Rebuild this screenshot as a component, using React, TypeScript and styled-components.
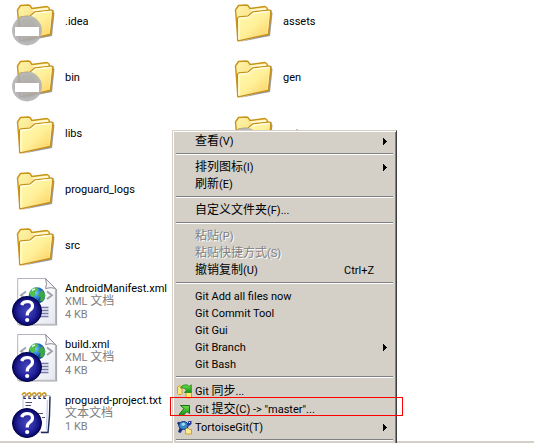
import React from 'react';
import styled, { createGlobalStyle } from 'styled-components';

const GlobalStyle = createGlobalStyle`
  *, *::before, *::after { box-sizing: border-box; }
  body {
    margin: 0;
    background: #fff;
    color: #000;
    overflow: hidden;
    font: 11px/13px Roboto, "Noto Sans CJK SC", sans-serif;
  }
  button {
    margin: 0;
    padding: 0;
    border: 0;
    background: none;
    color: inherit;
    font: inherit;
    text-align: left;
  }
`;

const Explorer = styled.div`
  position: relative;
  display: flex;
  flex-direction: column;
  height: 100vh;
  overflow: hidden;
`;

const FilePane = styled.main`
  flex: 1;
  min-height: 0;
  overflow: hidden;
  display: grid;
  grid-template-columns: 218px 218px;
  grid-template-rows: repeat(8, 40px);
  grid-auto-flow: column;
  row-gap: 16px;
  padding: 1px 0 0 12px;
`;

const StatusEdge = styled.footer`
  flex: none;
  height: 2px;
  background: #d4d0c8;
`;

const Tile = styled.button`
  display: flex;
  align-items: center;
  gap: 5px;
`;

const TileIcon = styled.svg`
  flex: none;
  width: 48px;
  height: 50px;
  overflow: visible;
`;

const TileText = styled.span`
  display: flex;
  flex-direction: column;
  white-space: nowrap;
`;

const TileDetail = styled.span`
  color: #808080;
`;

const Han = styled.span`
  font-size: 12px;
  line-height: 1px;
`;

const ContextMenu = styled.div`
  position: absolute;
  left: 172px;
  top: 130px;
  width: 225px;
  padding: 1px;
  background: #d4d0c8;
  border: 1px solid;
  border-color: #d4d0c8 #404040 #404040 #d4d0c8;
  box-shadow: inset 1px 1px #fff, inset -1px -1px #808080;
`;

const MenuBody = styled.div`
  display: flex;
  flex-direction: column;
  padding: 1px;
`;

const MenuItem = styled.button<{ $tall?: boolean }>`
  position: relative;
  display: grid;
  grid-template-columns: 20px 1fr auto 20px;
  align-items: center;
  height: ${(p) => (p.$tall ? 18 : 17)}px;
  white-space: nowrap;

  &:disabled {
    color: #808080;
    text-shadow: 1px 1px #fff;
  }
`;

const MenuIconSlot = styled.span`
  display: flex;
  padding-left: 1px;
`;

const MenuIcon = styled.svg`
  width: 16px;
  height: 16px;
`;

const SubmenuArrow = styled.svg`
  width: 4px;
  height: 7px;
  margin-left: 9px;
`;

const Separator = styled.hr`
  width: calc(100% - 2px);
  height: 2px;
  margin: 3px 1px 4px;
  border: 0;
  border-top: 1px solid #808080;
  border-bottom: 1px solid #fff;
`;

const RedOutline = styled.span`
  position: absolute;
  inset: -3px -9px 2px -5px;
  border: 1px solid #f00;
  pointer-events: none;
`;

const SharedDefs = styled.svg`
  position: absolute;
  width: 0;
  height: 0;
`;

function Label({ text }: { text: string }) {
  return (
    <span>
      {text.split(/([\u4e00-\u9fff]+)/).map((part, i) =>
        i % 2 ? <Han key={i}>{part}</Han> : part,
      )}
    </span>
  );
}

function Gradients() {
  return (
    <SharedDefs aria-hidden="true">
      <defs>
        <linearGradient id="folderFront" x1="0" y1="0" x2="1" y2="1">
          <stop offset="0" stopColor="#fffbb4" />
          <stop offset="0.5" stopColor="#fff09a" />
          <stop offset="1" stopColor="#fccb58" />
        </linearGradient>
        <linearGradient id="folderBack" x1="0" y1="0" x2="1" y2="1">
          <stop offset="0" stopColor="#fff6b0" />
          <stop offset="1" stopColor="#f0c848" />
        </linearGradient>
        <radialGradient id="ignored">
          <stop offset="0" stopColor="#a4a4ac" />
          <stop offset="0.7" stopColor="#a9a9ad" />
          <stop offset="1" stopColor="#b4b4b4" />
        </radialGradient>
        <radialGradient id="unknown">
          <stop offset="0" stopColor="#4646be" />
          <stop offset="0.6" stopColor="#2626a0" />
          <stop offset="1" stopColor="#050560" />
        </radialGradient>
        <radialGradient id="globe" cx="0.4" cy="0.35">
          <stop offset="0" stopColor="#8cd0ff" />
          <stop offset="0.6" stopColor="#2c80d4" />
          <stop offset="1" stopColor="#164a98" />
        </radialGradient>
        <linearGradient id="paper" x1="0" y1="0" x2="1" y2="1">
          <stop offset="0.4" stopColor="#fff" />
          <stop offset="1" stopColor="#e4e6f0" />
        </linearGradient>
        <linearGradient id="arrow" x1="0" y1="0" x2="0" y2="1">
          <stop offset="0" stopColor="#6fe04a" />
          <stop offset="1" stopColor="#109010" />
        </linearGradient>
      </defs>
    </SharedDefs>
  );
}

function FolderArt() {
  return (
    <>
      <path d="M9 46 L40 40 L42.500 17 L40 15 L38 38 Z" fill="#77777f" opacity="0.75" />
      <path
        d="M5.500 14 L8.500 9.500 L16.500 9 Q18 9 19 11 L20 12.500 L35 10.500 L37 12 L37.500 14 L41 15 L38.500 38 L8 44.500 Z"
        fill="url(#folderBack)"
        stroke="#c89418"
        strokeWidth="1.400"
        strokeLinejoin="round"
      />
      <path d="M20 13.500 L36 11.800 L36.500 14 L22 16 Z" fill="#fffad0" />
      <path
        d="M7.500 22.500 Q7.500 21 9 20.800 L18 20 L23 15.800 L39.500 14 Q41 14 40.800 15.500 L38.300 38.300 L8.500 44.800 Q7.500 45 7.500 43 Z"
        fill="url(#folderFront)"
        stroke="#c48f1c"
        strokeWidth="1.200"
        strokeLinejoin="round"
      />
      <path d="M9 43 V22.300 L18.500 21.400 L23.500 17.200 L39 15.500" fill="none" stroke="#fffde0" strokeWidth="1.300" />
      <path d="M39.300 16.500 L37.200 37" fill="none" stroke="#fff0a8" strokeWidth="1" />
    </>
  );
}

function IgnoredBadge() {
  return (
    <>
      <circle cx="15" cy="34.500" r="15" fill="url(#ignored)" opacity="0.88" />
      <rect x="3" y="31" width="24" height="9" fill="#fff" />
    </>
  );
}

function UnknownBadge() {
  return (
    <>
      <circle cx="15" cy="35" r="14.500" fill="url(#unknown)" stroke="#00004c" />
      <path d="M9.500 29 Q11 25.500 15.500 25.500 Q20.500 25.800 20.500 30 Q20.500 32.500 17.500 34.500 Q15.200 36 15.200 39.500" fill="none" stroke="#fff" strokeWidth="3.200" />
      <circle cx="15.200" cy="44" r="2.100" fill="#fff" />
    </>
  );
}

function XmlArt() {
  return (
    <>
      <path d="M44.500 13 V49 H7" fill="none" stroke="#a8a8b0" strokeWidth="1.200" />
      <path d="M5.700 2.500 H33.500 L43.500 12.500 V48.300 H5.700 Z" fill="url(#paper)" stroke="#b4b4bc" />
      <path d="M33.500 2.500 Q35.500 8 33.500 12.500 Q39 10.800 43.500 12.500 Z" fill="#f4f4f8" stroke="#8c8c94" />
      <path d="M14 15.500 L9 19.300 L14 23" fill="none" stroke="#a0a0ae" strokeWidth="1.800" />
      <path d="M35 15.500 L40 19.300 L35 23" fill="none" stroke="#a0a0ae" strokeWidth="1.800" />
      <circle cx="25" cy="19.500" r="8.300" fill="url(#globe)" />
      <path d="M18 16 Q20 11.500 25 11.500 L26.500 14 L23 16 L24 19 L20.500 21 L18 19 Z" fill="#4fc04c" />
      <path d="M27 17.500 L30 14 L33 18 Q33.500 22 30.500 25.500 L28 25 L28.500 21 L26 20 Z" fill="#3aa844" />
      <path d="M20 14.500 L23 12.800" stroke="#e2ffd8" strokeWidth="1.500" />
      <path d="M23 31.500 H36.500 M23 34.500 H36.500 M23 37.500 H36.500 M23 40.500 H36.500" stroke="#7878a8" strokeWidth="1.500" />
    </>
  );
}

function NotepadArt() {
  const rings = [12, 17, 22, 27, 32];
  return (
    <>
      <path d="M11 7.500 H38 L36.500 44 H11 Z" fill="#fdfdff" stroke="#c0c4d8" />
      <path d="M38 8.500 L37.500 28 L36 44.500 H29" fill="none" stroke="#202a58" strokeWidth="1.400" />
      <path d="M35.500 12 L34.500 42" stroke="#c4d0ee" strokeWidth="1.500" />
      <path d="M13.500 14.500 H20 M13.500 17.500 H19 M13.500 21.500 H20 M13.500 25.500 H31 M30 29.500 H33" stroke="#50506c" strokeWidth="1.200" />
      <g fill="none">
        {rings.map((x) => (
          <g key={x}>
            <path d={`M${x} 8 V10.500 H${x + 2}`} stroke="#283064" strokeWidth="1.200" />
            <path d={`M${x - 2} 7 Q${x - 1} 4.500 ${x + 1} 5 Q${x + 3} 6 ${x + 1} 9`} stroke="#c89a28" strokeWidth="1.600" />
          </g>
        ))}
      </g>
    </>
  );
}

type FileKind = 'folder' | 'ignored' | 'xml' | 'txt';

interface FileEntry {
  name: string;
  kind: FileKind;
  details?: string[];
}

const files: FileEntry[] = [
  { name: '.idea', kind: 'ignored' },
  { name: 'bin', kind: 'ignored' },
  { name: 'libs', kind: 'folder' },
  { name: 'proguard_logs', kind: 'folder' },
  { name: 'src', kind: 'folder' },
  { name: 'AndroidManifest.xml', kind: 'xml', details: ['XML 文档', '4 KB'] },
  { name: 'build.xml', kind: 'xml', details: ['XML 文档', '4 KB'] },
  { name: 'proguard-project.txt', kind: 'txt', details: ['文本文档', '1 KB'] },
  { name: 'assets', kind: 'folder' },
  { name: 'gen', kind: 'folder' },
  { name: 'out', kind: 'ignored' },
];

function FileTile({ file }: { file: FileEntry }) {
  return (
    <Tile type="button">
      <TileIcon viewBox="0 0 48 50" aria-hidden="true">
        {(file.kind === 'folder' || file.kind === 'ignored') && <FolderArt />}
        {file.kind === 'ignored' && <IgnoredBadge />}
        {file.kind === 'xml' && <XmlArt />}
        {file.kind === 'txt' && <NotepadArt />}
        {(file.kind === 'xml' || file.kind === 'txt') && <UnknownBadge />}
      </TileIcon>
      <TileText>
        <span>{file.name}</span>
        {file.details?.map((d) => (
          <TileDetail key={d}>
            <Label text={d} />
          </TileDetail>
        ))}
      </TileText>
    </Tile>
  );
}

const SyncIcon = () => (
  <MenuIcon viewBox="0 0 16 16" aria-hidden="true">
    <path d="M1.500 4 L3 3 H5 L6 4 V10.500 L5 11.500 H2.500 L1.500 10.500 Z" fill="#ffe680" stroke="#d0a020" />
    <path d="M10 9 L11 8 H14 L15.500 9 V14 L14.500 15 H11 L10 14 Z" fill="#ffe680" stroke="#d0a020" />
    <path d="M4.500 5 Q6 1.500 10 1.800 Q12.500 2 13 3.500 L15.300 1.800 V9.500 H8.500 L10.500 7 Q8.500 4 4.500 5 Z" fill="url(#arrow)" stroke="#188818" strokeWidth="0.800" />
  </MenuIcon>
);

const CommitIcon = () => (
  <MenuIcon viewBox="0 0 16 16" aria-hidden="true">
    <path d="M4.500 4.500 H13.500 V12.500 L11 10.500 L7 14.500 H3.500 V13 L8 7.500 Z" fill="url(#arrow)" stroke="#187018" />
  </MenuIcon>
);

const TortoiseIcon = () => (
  <MenuIcon viewBox="0 0 16 16" aria-hidden="true">
    <path d="M1 4 L3 2.500 L5 5 L3 7 Z M2 13 L4 8 L7 10 L4.500 14 Z M8 9 L12 8.500 L10 12 Z" fill="#182c78" />
    <ellipse cx="7.500" cy="6.500" rx="4.700" ry="4" fill="#3a86c8" stroke="#143878" />
    <path d="M5.500 4.500 L8 3.500 L9.500 5.500 L7.500 7 L5.500 6.500 Z" fill="#9cdcf4" />
    <path d="M11 6 L12.500 2 L15.500 2 V5 L13 7 Z" fill="#2038a0" />
    <rect x="13" y="3" width="1" height="1" fill="#fff" />
    <path d="M9.500 10.500 L10.500 9.500 H12.500 L13.500 10.500 H15.500 V15 H9.500 Z" fill="#ffec98" stroke="#cda030" />
  </MenuIcon>
);

interface ItemProps {
  text: string;
  icon?: React.ReactNode;
  shortcut?: string;
  submenu?: boolean;
  disabled?: boolean;
  outlined?: boolean;
}

function Item({ text, icon, shortcut, submenu, disabled, outlined }: ItemProps) {
  return (
    <MenuItem type="button" role="menuitem" disabled={disabled} $tall={Boolean(icon)} aria-haspopup={submenu ? 'menu' : undefined}>
      <MenuIconSlot>{icon}</MenuIconSlot>
      <Label text={text} />
      <span>{shortcut}</span>
      {submenu && (
        <SubmenuArrow viewBox="0 0 4 7" shapeRendering="crispEdges" aria-hidden="true">
          <path d="M0 0 L4 3.500 L0 7 Z" />
        </SubmenuArrow>
      )}
      {outlined && <RedOutline />}
    </MenuItem>
  );
}

export default function App() {
  return (
    <Explorer>
      <GlobalStyle />
      <Gradients />
      <FilePane>
        {files.map((f) => (
          <FileTile key={f.name} file={f} />
        ))}
      </FilePane>
      <StatusEdge />
      <ContextMenu role="menu">
        <MenuBody>
          <Item text="查看(V)" submenu />
          <Separator />
          <Item text="排列图标(I)" submenu />
          <Item text="刷新(E)" />
          <Separator />
          <Item text="自定义文件夹(F)..." />
          <Separator />
          <Item text="粘贴(P)" disabled />
          <Item text="粘贴快捷方式(S)" disabled />
          <Item text="撤销复制(U)" shortcut="Ctrl+Z" />
          <Separator />
          <Item text="Git Add all files now" />
          <Item text="Git Commit Tool" />
          <Item text="Git Gui" />
          <Item text="Git Branch" submenu />
          <Item text="Git Bash" />
          <Separator />
          <Item text="Git 同步..." icon={<SyncIcon />} />
          <Item text={'Git 提交(C) -> "master"...'} icon={<CommitIcon />} outlined />
          <Item text="TortoiseGit(T)" icon={<TortoiseIcon />} submenu />
          <Separator />
        </MenuBody>
      </ContextMenu>
    </Explorer>
  );
}
